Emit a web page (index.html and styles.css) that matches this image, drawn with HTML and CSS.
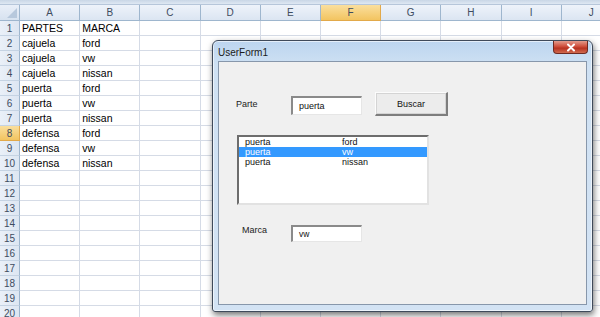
FILE: index.html
```html
<!DOCTYPE html>
<html lang="es">
<head>
  <meta charset="UTF-8" />
  <title>UserForm1</title>
  <link rel="stylesheet" href="styles.css">
</head>
<body>

  <!-- Hoja de calculo -->
  <div class="workbook">
    <div class="bar-edge"></div>
    <div class="sheet">
      <div class="corner"><span class="tri"></span></div>
      <div class="col-head">A</div><div class="col-head">B</div><div class="col-head">C</div><div class="col-head">D</div><div class="col-head">E</div>
      <div class="col-head active">F</div><div class="col-head">G</div><div class="col-head">H</div><div class="col-head">I</div><div class="col-head">J</div>

      <div class="row-head">1</div><div class="cell">PARTES</div><div class="cell">MARCA</div><div class="cell"></div><div class="cell"></div><div class="cell"></div><div class="cell"></div><div class="cell"></div><div class="cell"></div><div class="cell"></div><div class="cell"></div>
      <div class="row-head">2</div><div class="cell">cajuela</div><div class="cell">ford</div><div class="cell"></div><div class="cell"></div><div class="cell"></div><div class="cell"></div><div class="cell"></div><div class="cell"></div><div class="cell"></div><div class="cell"></div>
      <div class="row-head">3</div><div class="cell">cajuela</div><div class="cell">vw</div><div class="cell"></div><div class="cell"></div><div class="cell"></div><div class="cell"></div><div class="cell"></div><div class="cell"></div><div class="cell"></div><div class="cell"></div>
      <div class="row-head">4</div><div class="cell">cajuela</div><div class="cell">nissan</div><div class="cell"></div><div class="cell"></div><div class="cell"></div><div class="cell"></div><div class="cell"></div><div class="cell"></div><div class="cell"></div><div class="cell"></div>
      <div class="row-head">5</div><div class="cell">puerta</div><div class="cell">ford</div><div class="cell"></div><div class="cell"></div><div class="cell"></div><div class="cell"></div><div class="cell"></div><div class="cell"></div><div class="cell"></div><div class="cell"></div>
      <div class="row-head">6</div><div class="cell">puerta</div><div class="cell">vw</div><div class="cell"></div><div class="cell"></div><div class="cell"></div><div class="cell"></div><div class="cell"></div><div class="cell"></div><div class="cell"></div><div class="cell"></div>
      <div class="row-head">7</div><div class="cell">puerta</div><div class="cell">nissan</div><div class="cell"></div><div class="cell"></div><div class="cell"></div><div class="cell"></div><div class="cell"></div><div class="cell"></div><div class="cell"></div><div class="cell"></div>
      <div class="row-head active">8</div><div class="cell">defensa</div><div class="cell">ford</div><div class="cell"></div><div class="cell"></div><div class="cell"></div><div class="cell"></div><div class="cell"></div><div class="cell"></div><div class="cell"></div><div class="cell"></div>
      <div class="row-head">9</div><div class="cell">defensa</div><div class="cell">vw</div><div class="cell"></div><div class="cell"></div><div class="cell"></div><div class="cell"></div><div class="cell"></div><div class="cell"></div><div class="cell"></div><div class="cell"></div>
      <div class="row-head">10</div><div class="cell">defensa</div><div class="cell">nissan</div><div class="cell"></div><div class="cell"></div><div class="cell"></div><div class="cell"></div><div class="cell"></div><div class="cell"></div><div class="cell"></div><div class="cell"></div>
      <div class="row-head">11</div><div class="cell"></div><div class="cell"></div><div class="cell"></div><div class="cell"></div><div class="cell"></div><div class="cell"></div><div class="cell"></div><div class="cell"></div><div class="cell"></div><div class="cell"></div>
      <div class="row-head">12</div><div class="cell"></div><div class="cell"></div><div class="cell"></div><div class="cell"></div><div class="cell"></div><div class="cell"></div><div class="cell"></div><div class="cell"></div><div class="cell"></div><div class="cell"></div>
      <div class="row-head">13</div><div class="cell"></div><div class="cell"></div><div class="cell"></div><div class="cell"></div><div class="cell"></div><div class="cell"></div><div class="cell"></div><div class="cell"></div><div class="cell"></div><div class="cell"></div>
      <div class="row-head">14</div><div class="cell"></div><div class="cell"></div><div class="cell"></div><div class="cell"></div><div class="cell"></div><div class="cell"></div><div class="cell"></div><div class="cell"></div><div class="cell"></div><div class="cell"></div>
      <div class="row-head">15</div><div class="cell"></div><div class="cell"></div><div class="cell"></div><div class="cell"></div><div class="cell"></div><div class="cell"></div><div class="cell"></div><div class="cell"></div><div class="cell"></div><div class="cell"></div>
      <div class="row-head">16</div><div class="cell"></div><div class="cell"></div><div class="cell"></div><div class="cell"></div><div class="cell"></div><div class="cell"></div><div class="cell"></div><div class="cell"></div><div class="cell"></div><div class="cell"></div>
      <div class="row-head">17</div><div class="cell"></div><div class="cell"></div><div class="cell"></div><div class="cell"></div><div class="cell"></div><div class="cell"></div><div class="cell"></div><div class="cell"></div><div class="cell"></div><div class="cell"></div>
      <div class="row-head">18</div><div class="cell"></div><div class="cell"></div><div class="cell"></div><div class="cell"></div><div class="cell"></div><div class="cell"></div><div class="cell"></div><div class="cell"></div><div class="cell"></div><div class="cell"></div>
      <div class="row-head">19</div><div class="cell"></div><div class="cell"></div><div class="cell"></div><div class="cell"></div><div class="cell"></div><div class="cell"></div><div class="cell"></div><div class="cell"></div><div class="cell"></div><div class="cell"></div>
      <div class="row-head">20</div><div class="cell"></div><div class="cell"></div><div class="cell"></div><div class="cell"></div><div class="cell"></div><div class="cell"></div><div class="cell"></div><div class="cell"></div><div class="cell"></div><div class="cell"></div>
    </div>
  </div>

  <!-- UserForm -->
  <div class="dialog">
    <div class="titlebar">
      <span class="title">UserForm1</span>
      <span class="close-btn">
        <svg width="10" height="9" viewBox="0 0 10 9">
          <path d="M2 1.5 L8 7.5 M8 1.5 L2 7.5" stroke="#fff" stroke-width="2" stroke-linecap="round"/>
        </svg>
      </span>
    </div>
    <div class="client">
      <div class="form-row first">
        <span class="lbl">Parte</span>
        <div class="textbox">puerta</div>
        <div class="button">Buscar</div>
      </div>

      <div class="listbox">
        <div class="item"><span class="c1">puerta</span><span>ford</span></div>
        <div class="item selected"><span class="c1">puerta</span><span>vw</span></div>
        <div class="item"><span class="c1">puerta</span><span>nissan</span></div>
      </div>

      <div class="form-row second">
        <span class="lbl">Marca</span>
        <div class="textbox small">vw</div>
      </div>
    </div>
  </div>

</body>
</html>
```

FILE: styles.css
```css
body {
  margin: 0;
  width: 600px;
  height: 317px;
  overflow: hidden;
  position: relative;
  background: #fff;
  font-family: "Liberation Sans", Arial, sans-serif;
}

/* Hoja */
.bar-edge {
  height: 4px;
  background: linear-gradient(#c9d6e6, #dfe8f3);
  border-bottom: 1px solid #b6c6da;
}

.sheet {
  display: grid;
  grid-template-columns: 20px repeat(10, 60.2px);
  grid-template-rows: 16px;
  grid-auto-rows: 15px;
}

.corner {
  background: linear-gradient(#e9eff8, #d7e2f0);
  border-right: 1px solid #9eb6ce;
  border-bottom: 1px solid #9eb6ce;
  box-sizing: border-box;
  position: relative;
}

.corner .tri {
  position: absolute;
  right: 2px;
  bottom: 2px;
  width: 0;
  height: 0;
  border-left: 10px solid transparent;
  border-bottom: 10px solid #b7c8dc;
}

.col-head {
  background: linear-gradient(#eef3fa, #dbe5f2);
  border-right: 1px solid #9eb6ce;
  border-bottom: 1px solid #9eb6ce;
  box-sizing: border-box;
  text-align: center;
  font-size: 10px;
  line-height: 15px;
  color: #3e4c5f;
}

.row-head {
  background: linear-gradient(90deg, #eaf0f8, #dde6f2);
  border-right: 1px solid #9eb6ce;
  border-bottom: 1px solid #c5d3e3;
  box-sizing: border-box;
  text-align: center;
  font-size: 10px;
  line-height: 15px;
  color: #3e4c5f;
}

.col-head.active,
.row-head.active {
  background: linear-gradient(#fadf9e, #f3c460);
  border-color: #e2a94a;
}

.cell {
  border-right: 1px solid #d5dbe6;
  border-bottom: 1px solid #d5dbe6;
  box-sizing: border-box;
  padding-left: 2px;
  font-size: 10.5px;
  line-height: 15px;
  color: #000;
  white-space: nowrap;
}

/* Ventana del formulario */
.dialog {
  position: absolute;
  left: 212px;
  top: 40px;
  width: 381px;
  height: 272px;
  box-sizing: border-box;
  padding: 0 5px 6px 5px;
  border: 1px solid #3f4a5a;
  border-radius: 6px 6px 3px 3px;
  background: linear-gradient(#bcd5ef, #cfe1f3 25px, #d3e3f4);
  box-shadow: 1px 3px 6px rgba(0,0,0,0.55), inset 0 0 0 1px rgba(255,255,255,0.6);
  display: flex;
  flex-direction: column;
}

.titlebar {
  height: 20px;
  display: flex;
  justify-content: space-between;
  align-items: flex-start;
}

.title {
  font-family: "Liberation Sans", Arial, sans-serif;
  font-size: 10px;
  color: #1b1b1b;
  padding-top: 6px;
}

.close-btn {
  width: 35px;
  height: 13px;
  margin-right: -1px;
  box-sizing: border-box;
  border: 1px solid #6e2a22;
  border-top: none;
  border-radius: 0 0 4px 4px;
  background: linear-gradient(#e39b8c, #cf4f3c 45%, #b83322 60%, #d06a4e);
  display: flex;
  align-items: center;
  justify-content: center;
}

.client {
  flex: 1;
  background: #f0f0f0;
  border: 1px solid #8797ab;
  font-family: "Liberation Sans", Arial, sans-serif;
  font-size: 9px;
  color: #222;
  padding-left: 17px;
}

.form-row {
  display: flex;
  align-items: center;
}

.form-row.first {
  margin-top: 30px;
  height: 24px;
}

.form-row.second {
  margin-top: 20px;
  height: 17px;
}

.lbl {
  width: 55px;
}

.form-row.second .lbl {
  padding-left: 6px;
  width: 49px;
  margin-top: -8px;
}

.textbox {
  width: 71px;
  height: 19px;
  box-sizing: border-box;
  background: #fff;
  border-top: 2px solid #8a8a8a;
  border-left: 2px solid #8a8a8a;
  border-right: 1px solid #e6e6e6;
  border-bottom: 1px solid #e6e6e6;
  padding-left: 6px;
  line-height: 16px;
  color: #111;
  margin-top: 3px;
}

.textbox.small {
  height: 17px;
  line-height: 14px;
  margin-top: 0;
  font-size: 8.5px;
}

.button {
  margin-left: 13px;
  width: 73px;
  height: 24px;
  box-sizing: border-box;
  background: #ececec;
  border-top: 1px solid #fcfcfc;
  border-left: 1px solid #fcfcfc;
  border-right: 2px solid #7d7d7d;
  border-bottom: 2px solid #7d7d7d;
  box-shadow: inset 0 0 0 1px #d4d4d4;
  text-align: center;
  line-height: 22px;
  color: #111;
}

.listbox {
  margin-top: 19px;
  margin-left: 1px;
  width: 192px;
  height: 70px;
  box-sizing: border-box;
  background: #fff;
  border-top: 2px solid #6d6d6d;
  border-left: 2px solid #6d6d6d;
  border-right: 2px solid #e2e2e2;
  border-bottom: 2px solid #e2e2e2;
}

.item {
  display: flex;
  height: 10px;
  line-height: 10px;
  padding-left: 6px;
  color: #111;
}

.item .c1 {
  width: 97px;
}

.item.selected {
  background: #3399ff;
  color: #fff;
}
```
